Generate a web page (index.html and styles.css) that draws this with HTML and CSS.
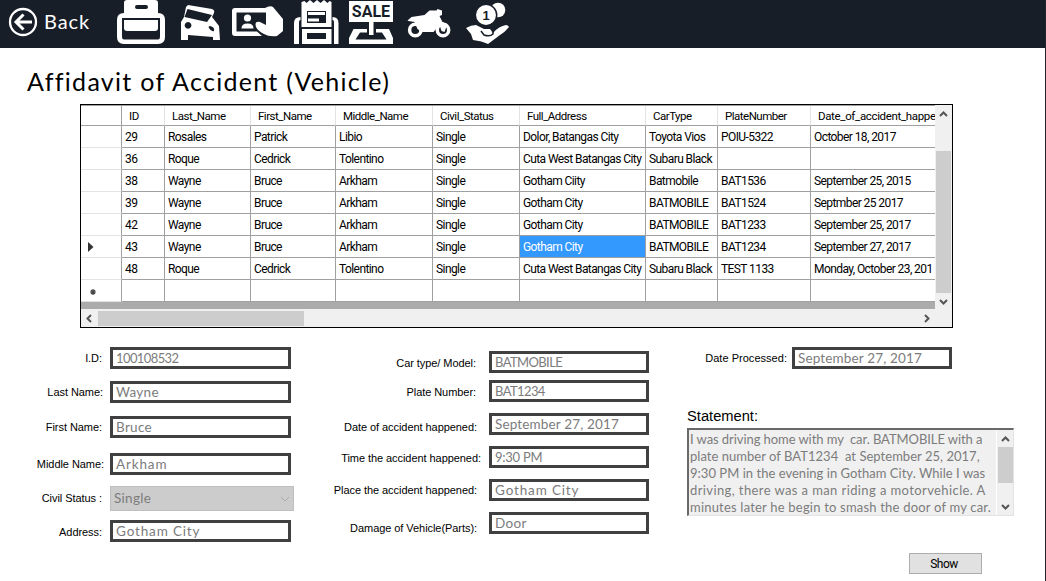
FILE: index.html
```html
<!DOCTYPE html>
<html lang="en">
<head>
<meta charset="utf-8">
<title>Affidavit of Accident (Vehicle)</title>
<link rel="stylesheet" href="styles.css">
</head>
<body>
<div class="window">
  <header class="toolbar">
    <svg class="back-icon" width="30" height="30" viewBox="0 0 30 30"><circle cx="15" cy="15" r="13" fill="none" stroke="#fff" stroke-width="2.3"/><path d="M24 15H8M15.500 7.500 8 15l7.500 7.500" fill="none" stroke="#fff" stroke-width="3"/></svg>
    <span class="back">Back</span>
    <svg class="icons" width="400" height="48" viewBox="112 0 400 48" fill="#fff">
      <path fill-rule="evenodd" d="M127 0H155Q158 0 158 3V13Q165 13 165 20V37Q165 44 158 44H124Q117 44 117 37V20Q117 13 124 13V3Q124 0 127 0ZM137 5Q135 5 135 7T137 9H146Q148 9 148 7T146 5ZM122 18V37Q122 39.500 124 39.500H158Q160 39.500 160 37V18Z"/>
      <path d="M124 20h34v8q0 3-3 3h-28q-3 0-3-3z"/>
      <path fill-rule="evenodd" d="M188 5l24 4q3 1 2 4l-2 4 7 9 1 14h-7v-3l-25-2v5h-7V22l3-5 2-10zM187.500 9l-3 8 22.500 5 5-7zM188 22a3.400 3.400 0 1 0 .1 0zM210 26q-2 0-1 2 2 4 5 3 1-4-4-5z"/>
      <path d="M235 8h32v4.500H236.500v19H257l5 4.500H235q-3 0-3-3V11q0-3 3-3z"/>
      <circle cx="247.500" cy="18" r="3.600"/><path d="M241.500 28.500q0-5 6-5t6 5z"/>
      <path d="M265 8q5-3 8-1l10 12v12l-6 5q-8 1-13-2-6-3-8-7-2-6 4-5l6 3V12l-2-4z"/>
      <path fill-rule="evenodd" d="M301.500 2l3-1 2 2 3.500-3 3.500 3 3.500-3 3.500 3 3.500-3 3.500 3 2-2 2 1v25h-30zM307 11v12h19V11z"/>
      <path d="M308 12h17v3h-17zM308 18.500h11v3h-11z"/>
      <path fill-rule="evenodd" d="M302 29h29.500v15H302zM307 33v6h19v-6z"/>
      <path d="M300.500 17v3q-1.500 0-1.500 2v22h-5V23q0-6 6.500-6zM332.500 17v3q1.500 0 1.500 2v22h4.500V23q0-6-6-6z"/>
      <path d="M349 1h44v21h-19.500v13H369V22h-20zM353.500 29H367v3.500h-7l-4.500 7h31l-4.500-7h-6V29h13l4 9v6h-44v-6z"/>
      <text class="sale" x="371" y="16.500" text-anchor="middle" fill="#181e28">SALE</text>
      <g fill="none" stroke="#fff" stroke-width="3.500"><circle cx="415.300" cy="30" r="5.700"/><circle cx="443" cy="30" r="5.700"/></g>
      <path d="M407.500 20.500l4-3.500 13-2 5-4.500 7 0 1-1.500 4.500 1.500v4.500l-2.500 1 3 6 5 2-3 8-3-1-2-6-6 7h-12l-4-3-3-7-6-1z"/>
      <circle cx="498" cy="10" r="7.300"/><circle cx="486" cy="15" r="10.700" stroke="#181e28" stroke-width="1.500"/>
      <text class="coin" x="486" y="19.500" text-anchor="middle" fill="#181e28">1</text>
      <path d="M466 28q5-3 10-3l8 4h6l3 4q6-7 13-8 2 0 3 2-4 5-9 8l-12 9q-6-3-15-4l-2-6z"/>
      <path d="M481 31l3 4q6 2 9-1l0-4" fill="none" stroke="#181e28" stroke-width="1.500"/>
    </svg>
  </header>
  <h1 class="title">Affidavit of Accident (Vehicle)</h1>

  <section class="grid">
    <div class="viewport">
      <div class="row head"><i></i><b>ID</b><b>Last_Name</b><b>First_Name</b><b>Middle_Name</b><b>Civil_Status</b><b>Full_Address</b><b>CarType</b><b>PlateNumber</b><b>Date_of_accident_happe</b></div>
      <div class="row"><i></i><span>29</span><span>Rosales</span><span>Patrick</span><span>Libio</span><span>Single</span><span>Dolor, Batangas City</span><span>Toyota Vios</span><span>POIU-5322</span><span>October 18, 2017</span></div>
      <div class="row"><i></i><span>36</span><span>Roque</span><span>Cedrick</span><span>Tolentino</span><span>Single</span><span>Cuta West Batangas City</span><span>Subaru Black</span><span></span><span></span></div>
      <div class="row"><i></i><span>38</span><span>Wayne</span><span>Bruce</span><span>Arkham</span><span>Single</span><span>Gotham Ciity</span><span>Batmobile</span><span>BAT1536</span><span>September 25, 2015</span></div>
      <div class="row"><i></i><span>39</span><span>Wayne</span><span>Bruce</span><span>Arkham</span><span>Single</span><span>Gotham City</span><span>BATMOBILE</span><span>BAT1524</span><span>Septmber 25 2017</span></div>
      <div class="row"><i></i><span>42</span><span>Wayne</span><span>Bruce</span><span>Arkham</span><span>Single</span><span>Gotham City</span><span>BATMOBILE</span><span>BAT1233</span><span>September 25, 2017</span></div>
      <div class="row"><i><svg width="6" height="10" viewBox="0 0 6 10"><path d="M0 0l5.500 5L0 10z" fill="#333"/></svg></i><span>43</span><span>Wayne</span><span>Bruce</span><span>Arkham</span><span>Single</span><span class="selected">Gotham City</span><span>BATMOBILE</span><span>BAT1234</span><span>September 27, 2017</span></div>
      <div class="row"><i></i><span>48</span><span>Roque</span><span>Cedrick</span><span>Tolentino</span><span>Single</span><span>Cuta West Batangas City</span><span>Subaru Black</span><span>TEST 1133</span><span>Monday, October 23, 201</span></div>
      <div class="row"><i class="new"><svg width="6" height="6" viewBox="0 0 6 6"><path d="M3 0v6M0 3h6M1 1l4 4M5 1 1 5" stroke="#444" stroke-width="1.200"/></svg></i><span></span><span></span><span></span><span></span><span></span><span></span><span></span><span></span><span></span></div>
    </div>
    <div class="vscroll"><svg width="9" height="6" viewBox="0 0 9 6"><path d="M1 5l3.500-3.500L8 5"/></svg><div class="thumb"></div><svg width="9" height="6" viewBox="0 0 9 6"><path d="M1 1l3.500 3.500L8 1"/></svg></div>
    <div class="hscroll"><svg width="6" height="9" viewBox="0 0 6 9"><path d="M5 1 1.500 4.500 5 8"/></svg><div class="thumb"></div><svg width="6" height="9" viewBox="0 0 6 9"><path d="M1 1l3.500 3.500L1 8"/></svg></div>
  </section>

  <main class="form">
    <div class="column person">
      <div class="field id"><label>I.D:</label><div class="input caps">100108532</div></div>
      <div class="field last"><label>Last Name:</label><div class="input">Wayne</div></div>
      <div class="field first"><label>First Name:</label><div class="input">Bruce</div></div>
      <div class="field middle"><label>Middle Name:</label><div class="input wide">Arkham</div></div>
      <div class="field civil"><label>Civil Status :</label><div class="select">Single<svg width="10" height="6" viewBox="0 0 10 6"><path d="M1 1l4 4 4-4"/></svg></div></div>
      <div class="field address"><label>Address:</label><div class="input wide">Gotham City</div></div>
    </div>
    <div class="column accident">
      <div class="field car"><label>Car type/ Model:</label><div class="input caps">BATMOBILE</div></div>
      <div class="field plate"><label>Plate Number:</label><div class="input caps">BAT1234</div></div>
      <div class="field date"><label>Date of accident happened:</label><div class="input tight">September 27, 2017</div></div>
      <div class="field time"><label>Time the accident happened:</label><div class="input caps">9:30 PM</div></div>
      <div class="field place"><label>Place the accident happened:</label><div class="input wide">Gotham City</div></div>
      <div class="field damage"><label>Damage of Vehicle(Parts):</label><div class="input">Door</div></div>
    </div>
    <div class="column report">
      <div class="field processed"><label>Date Processed:</label><div class="input tight">September 27, 2017</div></div>
      <h2 class="statement-title">Statement:</h2>
      <div class="statement">
        <div class="lines"><p class="l1">I was driving home with my&nbsp; car. BATMOBILE with a</p><p class="l2">plate number of BAT1234&nbsp; at September 25, 2017,</p><p class="l3">9:30 PM in the evening in Gotham City. While I was</p><p class="l4">driving, there was a man riding a motorvehicle. A</p><p class="l5">minutes later he begin to smash the door of my car.</p></div>
        <div class="vscroll small"><svg width="9" height="6" viewBox="0 0 9 6"><path d="M1 5l3.500-3.500L8 5"/></svg><div class="thumb"></div><svg width="9" height="6" viewBox="0 0 9 6"><path d="M1 1l3.500 3.500L8 1"/></svg></div>
      </div>
      <button class="show">Show</button>
    </div>
  </main>
</div>
</body>
</html>
```
FILE: styles.css
```css
* { box-sizing: border-box; }
body { margin: 0; background: #fff; font-family: "Liberation Sans", Arial, sans-serif; font-size: 11px; color: #000; }
.window { width: 1046px; height: 581px; overflow: hidden; border-right: 1px solid #24242a; }
.toolbar { height: 48px; background: #181e28; display: flex; align-items: flex-start; }
.back-icon { margin: 7px 0 0 8px; }
.back { width: 68px; margin: 7px 0 0 6px; color: #fff; font: 400 20px/28px Lato, sans-serif; letter-spacing: .9px; }
.icons { display: block; }
.sale { font: bold 16px Roboto, sans-serif; }
.coin { font: bold 13px "Liberation Sans", sans-serif; }
.title { margin: 15px 0 0 27px; height: 41px; font: 400 25px/36px Lato, sans-serif; letter-spacing: 1.3px; white-space: nowrap; }

.grid { margin-left: 80px; width: 873px; height: 224px; border: 1px solid #000; display: grid; grid-template: 205px 17px / 854px 17px; background: #f0f0f0; }
.viewport { background: #ababab; border-top: 1px solid #a0a0a0; border-bottom: 1px solid #f0f0f0; overflow: hidden; }
.row { display: grid; grid-template-columns: 41px 43px 86px 85px 97px 87px 126px 72px 93px 124px; height: 22px; font: 12px/22px Roboto, sans-serif; letter-spacing: -.58px; background: #fff; }
.row.head { height: 20px; line-height: 21px; font-size: 11.5px; }
.row > * { border-right: 1px solid #a0a0a0; border-bottom: 1px solid #a0a0a0; padding-left: 3px; overflow: hidden; white-space: nowrap; font-weight: 400; }
.row > :last-child { border-right: 0; }
.row i { border-bottom-color: #e3e3e3; padding: 6px 0 0 7px; display: block; line-height: 0; }
.row i.new { padding: 9px 0 0 9px; }
.row.head b { border-right-color: #e3e3e3; padding-left: 7px; letter-spacing: -.5px; }
.row.head b:last-child { letter-spacing: -.34px; }
.row.head i { border-bottom-color: #a0a0a0; }
.row .selected { background: #3399ff; color: #fff; }
.vscroll, .hscroll { display: flex; align-items: center; background: #f0f0f0; }
.vscroll { flex-direction: column; padding: 6px 0 4px; }
.vscroll svg path, .hscroll svg path { fill: none; stroke: #555; stroke-width: 2; }
.vscroll .thumb { width: 15px; height: 142px; margin: 34px 0 6px; background: #cdcdcd; }
.hscroll { padding-left: 5px; }
.hscroll .thumb { width: 206px; height: 15px; margin: 0 620px 0 6px; background: #cdcdcd; }
.hscroll svg { flex: none; }

.form { display: flex; align-items: flex-start; padding-top: 19px; }
.column { display: flex; flex-direction: column; }
.person { width: 294px; }
.accident { width: 355px; padding-top: 4px; }
.report { width: 365px; padding-left: 38px; }
.field { display: flex; height: 22px; }
.field label { width: 102px; margin-right: 8px; text-align: right; line-height: 22px; letter-spacing: -.06px; white-space: nowrap; }
.accident label { width: 182px; margin-right: 13px; }
.input { width: 181px; height: 22px; border: 3px solid #404040; padding-left: 3px; color: #7c7c7c; font: 400 13.5px/17px Lato, sans-serif; letter-spacing: .3px; white-space: nowrap; }
.input.wide { letter-spacing: .85px; }
.input.tight { letter-spacing: .15px; }
.input.caps { font-size: 13px; letter-spacing: -.6px; }
.time .input.caps { letter-spacing: -.25px; }
.accident .input, .report .input { width: 160px; }
.last { margin-top: 12px; }
.last label { width: 103px; margin-right: 7px; }
.first { margin-top: 13px; }
.middle { margin-top: 15px; }
.middle label { width: 104px; margin-right: 6px; }
.civil { margin-top: 11px; height: 25px; }
.civil label { line-height: 24px; }
.address { margin-top: 9px; }
.address label { line-height: 24px; }
.select { width: 184px; height: 25px; background: #ccc; border: 1px solid #bfbfbf; color: #7c7c7c; font: 400 13.5px/23px Lato, sans-serif; letter-spacing: .3px; padding: 0 3px; display: flex; align-items: center; justify-content: space-between; }
.select path { fill: none; stroke: #aaa; }
.car label, .plate label { line-height: 24px; }
.plate { margin-top: 7px; }
.date, .time, .place, .damage { margin-top: 11px; }
.date label, .place label, .damage label { width: 183px; margin-right: 12px; }
.date label { line-height: 28px; }
.time label { width: 187px; margin-right: 8px; line-height: 24px; }
.damage label { line-height: 32px; }
.processed label { width: 100px; margin-right: 5px; letter-spacing: .03px; }
.statement-title { margin: 37px 0 0; font: 14.7px/20px "Liberation Sans", sans-serif; }
.statement { width: 327px; height: 88px; margin-top: 2px; display: flex; background: #f0f0f0; border: 2px solid; border-color: #696969 #e3e3e3 #e3e3e3 #696969; border-width: 2px 1px 1px 2px; }
.lines { width: 307px; overflow: hidden; padding: 1px 0 0 1px; color: #7c7c7c; font: 400 13px/17px Lato, sans-serif; }
.lines p { margin: 0; white-space: nowrap; }
.l1 { letter-spacing: -.07px; }
.l2 { letter-spacing: .03px; }
.l3 { letter-spacing: .03px; }
.l4 { letter-spacing: .4px; }
.l5 { letter-spacing: .2px; }
.small { width: 17px; padding: 6px 0 4px; border-left: 1px solid #fff; }
.vscroll.small .thumb { height: 36px; margin: 5px 0 21px; }
.show { margin: 37px 0 0 222px; width: 73px; height: 21px; padding: 0 3px 0 0; border: 1px solid #adadad; background: #e1e1e1; font: 12px/18px Roboto, sans-serif; letter-spacing: -.5px; color: #000; }
```
